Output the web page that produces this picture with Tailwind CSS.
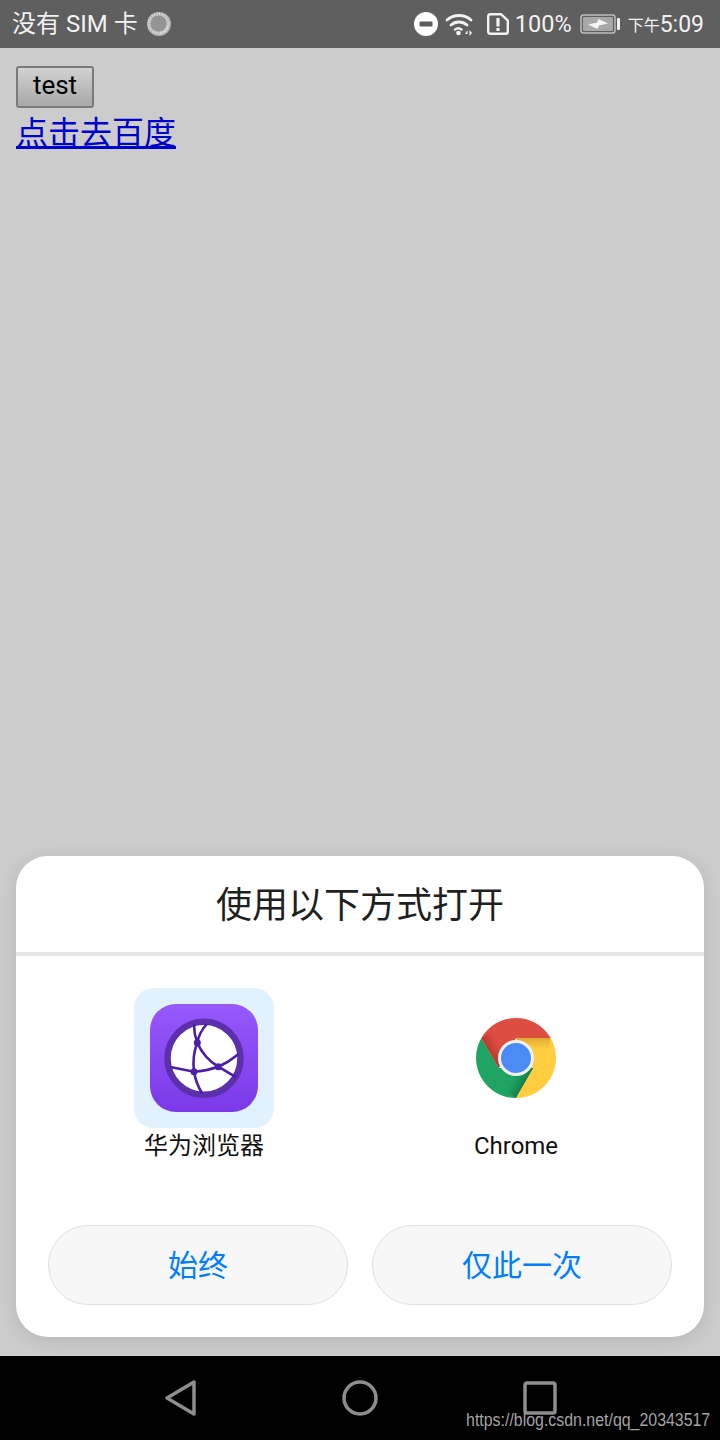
<!DOCTYPE html>
<html lang="zh-CN">
    <head>
        <meta charset="UTF-8">
        <title>使用以下方式打开</title>
        <script src="https://cdn.jsdelivr.net/npm/@tailwindcss/browser@4"></script>
    </head>
    <body class="bg-[#cccccc] font-['Roboto','Noto_Sans_CJK_SC',sans-serif]">
        <div class="relative flex flex-col w-[720px] h-[1440px] overflow-hidden">

            <!-- Status bar -->
            <div class="flex items-center justify-between h-12 pl-3 pr-4 bg-[#5f5f5f] text-[#f2f2f2] shrink-0">
                <div class="flex items-center gap-[9px]">
                    <span class="text-[24px] leading-none">没有 SIM 卡</span>
                    <svg width="24" height="24" viewBox="0 0 24 24" fill="none">
                        <circle cx="12" cy="12" r="12" fill="#b4b4b4" />
                        <path d="M21.500 10A10 10 0 0 1 9 21.500A11 11 0 0 0 21.500 10z" fill="#f0f0f0" />
                        <circle cx="11.500" cy="11.500" r="9.500" stroke="#dcdcdc" stroke-width="3" stroke-dasharray="1 1.500" />
                        <circle cx="11.500" cy="11.500" r="8" fill="#949494" />
                    </svg>
                </div>
                <div class="flex items-center">
                    <svg width="24" height="24" viewBox="0 0 24 24">
                        <circle cx="12" cy="12" r="12" fill="#ffffff" />
                        <rect x="5.500" y="9.500" width="13" height="5" rx="1" fill="#5f5f5f" />
                    </svg>
                    <svg class="ml-[7px]" width="29" height="24" viewBox="0 0 29 24" fill="none" stroke="#f2f2f2" stroke-width="2.800" stroke-linecap="round">
                        <path d="M2 8C8.500 2 19.500 2 26 8" />
                        <path d="M6 13C10.500 9 17.500 9 22 13" />
                        <path d="M10 17.500C12 16 14.500 16 16.500 17.500" stroke-width="2.500" />
                        <circle cx="13.500" cy="21" r="2.300" fill="#f2f2f2" stroke="none" />
                        <path d="M22.500 18l-2.500 4h2.500zM24.500 18v6l2.500-3z" fill="#f2f2f2" stroke="none" />
                    </svg>
                    <svg class="ml-[13px]" width="22" height="22" viewBox="0 0 22 22" fill="none">
                        <path d="M3.500 1.200H14L20.800 7.500V18.500a2.300 2.300 0 0 1-2.300 2.300H3.500a2.300 2.300 0 0 1-2.300-2.300V3.500a2.300 2.300 0 0 1 2.300-2.300z" stroke="#f2f2f2" stroke-width="2.400" />
                        <rect x="9.400" y="5" width="3.200" height="8.500" fill="#f2f2f2" />
                        <rect x="9.400" y="15" width="3.200" height="3" fill="#f2f2f2" />
                    </svg>
                    <span class="ml-[6px] mt-[2px] text-[23.5px] leading-none">100%</span>
                    <svg class="ml-2" width="40" height="20" viewBox="0 0 40 20">
                        <rect x="1" y="1" width="34" height="18" rx="2.500" fill="none" stroke="#bdbdbd" stroke-width="1.500" />
                        <rect x="3" y="3" width="30" height="14" rx="1" fill="#a8a8a8" />
                        <path d="M8 10.500L17 8.500 18.500 5 28 9.500 19 11.500 17.500 15z" fill="#f4f4f4" />
                        <rect x="37" y="4" width="3" height="12" rx="1" fill="#f2f2f2" />
                    </svg>
                    <span class="ml-2 text-[16px] leading-none mt-[4px]">下午</span>
                    <span class="mt-px text-[23px] leading-none">5:09</span>
                </div>
            </div>

            <!-- Page + chooser sheet -->
            <div class="flex flex-col justify-between flex-1 px-4 pt-[18px] pb-[19px]">
                <div class="flex flex-col items-start">
                    <button class="w-[78px] h-[42px] border-2 border-[#7b7b7b] rounded-[3px] bg-gradient-to-b from-[#d2d2d2] to-[#a8a8a8] text-[26px] leading-none text-black pb-1">test</button>
                    <a href="#" class="text-[32px] leading-[50px] text-[#0000cc] underline">点击去百度</a>
                </div>

                <div class="w-[688px] h-[481px] bg-white rounded-[32px] shadow-[0_4px_18px_rgba(0,0,0,0.1)]">
                    <div class="flex items-center justify-center h-[100px] pt-1 border-b-4 border-[#e6e6e6] text-[36px] leading-none text-[#1f1f1f]">使用以下方式打开</div>

                    <div class="grid grid-cols-2 px-8 pt-8">
                        <div class="flex flex-col items-center">
                            <div class="flex items-center justify-center w-[140px] h-[140px] rounded-[20px] bg-[#e2f1fe]">
                                <svg width="108" height="108" viewBox="0 0 108 108">
                                    <defs>
                                        <linearGradient id="hw" x1="0" y1="0" x2="0" y2="1">
                                            <stop offset="0" stop-color="#9659fb" />
                                            <stop offset="1" stop-color="#7b39e8" />
                                        </linearGradient>
                                    </defs>
                                    <rect width="108" height="108" rx="26" fill="url(#hw)" />
                                    <circle cx="54" cy="54.300" r="36.500" fill="#ffffff" stroke="#5c30ad" stroke-width="6.500" />
                                    <g fill="none" stroke="#4a1fa8" stroke-width="2.600" stroke-linecap="round">
                                        <path d="M56 21Q49 29 47.300 38.700Q42 52 44 67.700Q46 79 51.700 88.700" />
                                        <path d="M44 21Q44 30 47.300 38.700Q54 54 68.300 62.700L85 72.700" />
                                        <path d="M21.700 63.300L44 67.700Q56 67 68.300 62.700Q79 58 87.300 51" />
                                    </g>
                                    <g fill="#4a1fa8">
                                        <circle cx="47.300" cy="38.700" r="3.500" />
                                        <circle cx="68.300" cy="62.700" r="3.500" />
                                        <circle cx="44" cy="67.700" r="3.500" />
                                    </g>
                                </svg>
                            </div>
                            <span class="mt-[3px] text-[24px] leading-[30px] text-[#111111]">华为浏览器</span>
                        </div>
                        <div class="flex flex-col items-center">
                            <div class="flex items-center justify-center w-[140px] h-[140px]">
                                <svg width="80" height="80" viewBox="-40 -40 80 80">
                                    <defs>
                                        <linearGradient id="shade-red" gradientUnits="userSpaceOnUse" x1="-26" y1="-5" x2="-15.600" y2="-11">
                                            <stop offset="0" stop-color="#8e2014" stop-opacity=".45" />
                                            <stop offset="1" stop-color="#8e2014" stop-opacity="0" />
                                        </linearGradient>
                                        <linearGradient id="shade-green" gradientUnits="userSpaceOnUse" x1="8.660" y1="25" x2="-1.700" y2="19">
                                            <stop offset="0" stop-color="#0a5e2f" stop-opacity=".5" />
                                            <stop offset="1" stop-color="#0a5e2f" stop-opacity="0" />
                                        </linearGradient>
                                        <linearGradient id="shade-yellow" gradientUnits="userSpaceOnUse" x1="17" y1="-20" x2="17" y2="-9">
                                            <stop offset="0" stop-color="#b5761c" stop-opacity=".4" />
                                            <stop offset="1" stop-color="#b5761c" stop-opacity="0" />
                                        </linearGradient>
                                    </defs>
                                    <path d="M34.640-20A40 40 0 0 0-34.640-20L-17.320 10 0-20z" fill="#dd4e40" />
                                    <path d="M-34.640-20A40 40 0 0 0 0 40L17.320 10-17.320 10z" fill="#1fa463" />
                                    <path d="M0 40A40 40 0 0 0 34.640-20H0L17.320 10z" fill="#ffcd40" />
                                    <path d="M-34.640-20L-17.320 10-7 4-24-26z" fill="url(#shade-red)" />
                                    <path d="M0 40L17.320 10 7 4-10 34z" fill="url(#shade-green)" />
                                    <path d="M0-20H34.640L32-9H0z" fill="url(#shade-yellow)" />
                                    <circle r="18" fill="#eef2f7" />
                                    <circle r="15" fill="#4c8bf5" />
                                </svg>
                            </div>
                            <span class="mt-[3px] text-[24px] leading-[30px] text-[#111111]">Chrome</span>
                        </div>
                    </div>

                    <div class="flex gap-6 px-8 mt-16">
                        <button class="flex-1 h-20 pt-[2px] rounded-full border border-[#e0e0e0] bg-[#f7f7f7] text-[30px] leading-none text-[#007dff]">始终</button>
                        <button class="flex-1 h-20 pt-[2px] rounded-full border border-[#e0e0e0] bg-[#f7f7f7] text-[30px] leading-none text-[#007dff]">仅此一次</button>
                    </div>
                </div>
            </div>

            <!-- Navigation bar -->
            <div class="flex items-center justify-center h-[84px] bg-black shrink-0">
                <svg class="ml-px" width="34" height="38" viewBox="0 0 34 38" fill="none" stroke="#8e8e8e" stroke-width="3.500" stroke-linejoin="round">
                    <path d="M30 3V35L3 19z" />
                </svg>
                <svg class="ml-[144px]" width="36" height="36" viewBox="0 0 36 36" fill="none" stroke="#8e8e8e" stroke-width="3.500">
                    <circle cx="18" cy="18" r="16" />
                </svg>
                <svg class="ml-[145px]" width="34" height="34" viewBox="0 0 34 34" fill="none" stroke="#8e8e8e" stroke-width="3.500" stroke-linejoin="round">
                    <rect x="2" y="2" width="30" height="30" rx="2" />
                </svg>
            </div>

            <!-- Blog watermark -->
            <span class="absolute right-[10px] bottom-[8px] origin-right scale-x-[0.884] text-[18px] leading-[24px] text-[#c4c4c4]/85 font-['Liberation_Sans',sans-serif]">https://blog.csdn.net/qq_20343517</span>
        </div>
    </body>
</html>
